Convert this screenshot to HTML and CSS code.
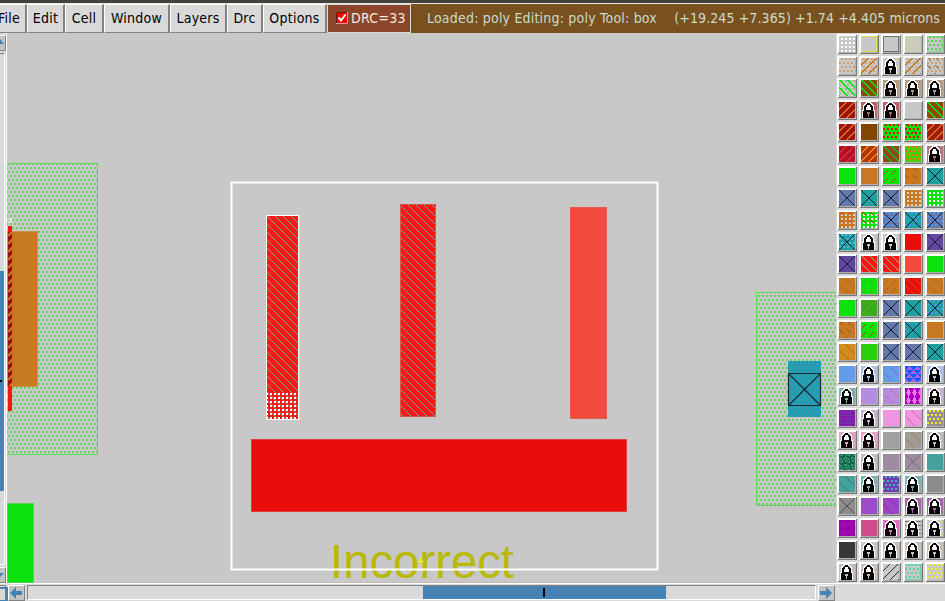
FILE: index.html
```html
<!DOCTYPE html>
<html lang="en">
<head>
<meta charset="utf-8">
<title>poly</title>
<link rel="stylesheet" href="styles.css">
</head>
<body>
<header class="menubar">
  <button class="menu file"><span>File</span></button>
  <button class="menu edit">Edit</button>
  <button class="menu cell-menu">Cell</button>
  <button class="menu window">Window</button>
  <button class="menu layers">Layers</button>
  <button class="menu drc">Drc</button>
  <button class="menu options">Options</button>
  <div class="drc-status">
    <svg width="12" height="12" viewBox="0 0 12 12"><path fill="#f00" d="M0 0h12v12H0z"/><path d="M.5 12V.5H12" fill="none" stroke="#701810"/><path d="M0 11.5h11.5V0" fill="none" stroke="#e8a090"/><path d="M2.5 5.5l2.5 3 4.500-6" fill="none" stroke="#fff" stroke-width="2"/></svg>
    <span class="drc-label">DRC=33</span>
  </div>
  <div class="status"><span class="loaded">Loaded: poly Editing: poly Tool: box</span><span class="coords">(+19.245 +7.365) +1.74 +4.405 microns</span></div>
</header>
<main class="workspace">
  <aside class="vscroll">
    <div class="varrow"><svg width="4" height="12" viewBox="0 0 4 12"><path d="M0 2l4 5H0z" fill="#4682b4"/></svg></div>
    <div class="vtrack"><div class="vthumb"><i></i></div></div>
    <div class="varrow down"><svg width="4" height="12" viewBox="0 0 4 12"><path d="M0 4h4L0 8z" fill="#4682b4"/></svg></div>
  </aside>
  <svg class="layout" width="829" height="550" viewBox="7 33 829 550" shape-rendering="crispEdges">
    <defs>
      <pattern id="well" width="4" height="8" x="2" y="167" patternUnits="userSpaceOnUse"><path d="M0 0h2v2H0zM2 4h2v2H2z" fill="#5fd75f"/></pattern>
      <pattern id="hatch" width="8" height="8" x="267" y="216" patternUnits="userSpaceOnUse"><path d="M0 0h1v1H0zM1 1h1v1H1zM2 2h1v1H2zM3 3h1v1H3zM4 4h1v1H4zM5 5h1v1H5zM6 6h1v1H6zM7 7h1v1H7z" fill="#8c98b0"/></pattern>
      <pattern id="faint" width="16" height="16" patternUnits="userSpaceOnUse"><path d="M0 16L16 0" stroke="#be5000"/></pattern>
      <pattern id="select" width="4" height="4" x="270" y="393" patternUnits="userSpaceOnUse"><path d="M0 0h2v2H0z" fill="#fff"/></pattern>
      <pattern id="contact" width="8" height="8" y="236" patternUnits="userSpaceOnUse"><path d="M0 8L8 0" stroke="#c87820" stroke-width="1.500"/></pattern>
      <pattern id="tealdots" width="4" height="8" x="2" y="167" patternUnits="userSpaceOnUse"><path d="M0 0h2v2H0zM2 4h2v2H2z" fill="#4094b8"/></pattern>
    </defs>
    <path d="M7 163.500h90.500v291H7" fill="url(#well)" stroke="#5fd75f"/>
    <path d="M836 292.500h-79.500v213h79.500" fill="url(#well)" stroke="#5fd75f"/>
    <path d="M8 219h4M8 221h4M11 218v5" stroke="#eee"/>
    <rect x="7.500" y="231.500" width="30" height="155" fill="#c67a22" stroke="#cb9154"/>
    <rect x="8" y="226" width="4" height="185" fill="#fa140a"/>
    <rect x="8" y="232" width="4" height="154" fill="#a50e0e"/>
    <rect x="8" y="232" width="4" height="154" fill="url(#contact)"/>
    <rect x="7.500" y="503.500" width="26" height="79" fill="#0ce20c" stroke="#58cf58"/>
    <rect x="266.500" y="215.500" width="32" height="203" fill="#fc180c"/>
    <rect x="267" y="216" width="31" height="177" fill="url(#faint)"/>
    <rect x="267" y="216" width="31" height="203" fill="url(#hatch)"/>
    <rect x="267" y="393" width="31" height="26" fill="url(#select)"/>
    <rect x="266.500" y="215.500" width="32" height="203.500" fill="none" stroke="#fff"/>
    <path d="M299.500 217v202" stroke="#e6e6e6" stroke-dasharray="2 2"/>
    <rect x="400.500" y="204.500" width="35" height="212" fill="#fc180c"/>
    <rect x="400.500" y="204.500" width="35" height="212" fill="url(#hatch)" stroke="#d9544e"/>
    <rect x="570.500" y="207.500" width="35.500" height="211" fill="#f24a3c" stroke="#e35a4f"/>
    <rect x="251.500" y="439.500" width="375" height="72" fill="#eb0c0c" stroke="#df4040"/>
    <g shape-rendering="auto">
      <rect x="788" y="361" width="33" height="56" fill="#1f9fae"/>
      <rect x="788" y="361" width="33" height="56" fill="url(#tealdots)"/>
      <path d="M788.500 373.500h32v32h-32zM788.500 373.500l32 32M820.500 373.500l-32 32" fill="none" stroke="#102c30" stroke-width="1.200"/>
    </g>
    <text class="cell-label" x="330" y="577.500" textLength="184" lengthAdjust="spacingAndGlyphs">Incorrect</text>
    <path d="M417.500 561h6M420.500 558v6" stroke="#f2f21c"/>
    <rect x="231.500" y="182.500" width="426" height="387" fill="none" stroke="#fff" stroke-width="2" shape-rendering="auto"/>
    <path d="M80 582.500h756" stroke="#cdb8b8"/>
  </svg>
  <aside class="palette" id="palette"></aside>
</main>
<footer class="hscroll">
  <div class="corner"></div>
  <div class="harrow"><svg width="14" height="14" viewBox="0 0 14 14"><path d="M1 7l6-6v4h6v4H7v4z" fill="#4682b4"/></svg></div>
  <div class="htrack"><div class="hthumb"><i></i></div></div>
  <div class="harrow"><svg width="14" height="14" viewBox="0 0 14 14"><path d="M13 7L7 1v4H1v4h6v4z" fill="#4682b4"/></svg></div>
</footer>
<script src="palette.js"></script>
</body>
</html>
```
FILE: styles.css
```css
* { box-sizing: border-box; }
body {
  margin: 0;
  width: 945px;
  height: 601px;
  overflow: hidden;
  display: flex;
  flex-direction: column;
  background: #d9d9d9;
  border-top: 3px solid #43423a;
  font-family: "DejaVu Sans Condensed", "DejaVu Sans", sans-serif;
  font-stretch: condensed;
  font-size: 14px;
}
.menubar {
  height: 30px;
  flex: none;
  display: flex;
  border-top: 1px solid #e8e8e8;
}
.menu {
  height: 29px;
  flex: none;
  margin: 0;
  padding: 0 0 1px;
  border: solid;
  border-width: 1px 2px 1px 1px;
  border-color: #fff #828282 #828282 #fff;
  background: #d9d9d9;
  color: #000;
  font: inherit;
  letter-spacing: 0.25px;
  text-align: center;
  white-space: nowrap;
}
.file { width: 27px; display: flex; align-items: center; justify-content: flex-end; padding-right: 5px; overflow: hidden; border-left: 0; }
.edit { width: 38px; }
.cell-menu { width: 39px; }
.window { width: 66px; }
.layers { width: 57px; }
.drc { width: 36px; }
.options { width: 64px; }
.drc-status {
  width: 84px;
  display: flex;
  flex: none;
  align-items: center;
  gap: 3px;
  padding: 0 0 1px 8px;
  border: 1px solid #d9d9d9;
  background: #8b4528;
  color: #f4e8e0;
}
.drc-label { white-space: nowrap; letter-spacing: 0.3px; }
.status {
  flex: 1;
  display: flex;
  align-items: center;
  justify-content: space-between;
  padding: 0 5px 1px 16px;
  background: #79511e;
  color: #c8dcd0;
  white-space: nowrap;
}
.loaded { letter-spacing: 0.2px; }
.coords { letter-spacing: 0.1px; }
.workspace {
  display: flex;
  height: 550px;
  flex: none;
}
.vscroll {
  width: 7px;
  flex: none;
  display: flex;
  flex-direction: column;
  border-right: 1px solid #fff;
  padding-top: 2px;
}
.varrow {
  width: 6px;
  height: 16px;
  flex: none;
  border: solid #fff;
  border-width: 1px 0 0;
  border-right: 1px solid #828282;
  border-bottom: 1px solid #828282;
  background: #c3c3c3;
  display: flex;
  align-items: center;
}
.vtrack {
  flex: 1;
  width: 5px;
  margin: 2px 0;
  border: 1px solid #828282;
  border-left: 0;
  border-right-color: #fff;
  border-bottom-color: #fff;
}
.vthumb {
  height: 220px;
  margin-top: 217px;
  background: #4682b4;
  display: flex;
  align-items: center;
}
.vthumb i { width: 2px; height: 2px; background: #000; }
.layout { display: block; flex: none; background: #c8c8c8; overflow: visible; }
.cell-label {
  font-family: "Liberation Sans", Arial, sans-serif;
  font-size: 48px;
  fill: #b9b900;
}
.palette {
  flex: none;
  width: 110px;
  margin: 0 -2px 0 1px;
  padding-top: 1px;
  display: grid;
  grid-template-columns: repeat(5, 22px);
  grid-auto-rows: 22px;
}
.swatch {
  width: 20px;
  height: 20px;
  display: block;
}
.hscroll {
  height: 18px;
  flex: none;
  display: flex;
  border-top: 1px solid #fff;
  padding-top: 1px;
}
.corner {
  width: 6px;
  height: 16px;
  margin-right: 2px;
  border: solid #828282;
  border-width: 1px 1px 0 0;
  position: relative;
}
.corner::after {
  content: "";
  position: absolute;
  left: -8px;
  top: 1px;
  width: 12px;
  height: 11px;
  border: 2px solid #4682b4;
}
.harrow {
  width: 17px;
  height: 16px;
  flex: none;
  border: 1px solid #fff;
  border-right-color: #828282;
  border-bottom-color: #828282;
  background: #c3c3c3;
  display: flex;
  align-items: center;
}
.htrack {
  width: 789px;
  height: 15px;
  margin: 0 2px;
  border: 1px solid #828282;
  border-right-color: #fff;
  border-bottom-color: #fff;
}
.hthumb {
  width: 243px;
  height: 13px;
  margin-left: 395px;
  padding-right: 2px;
  background: #4682b4;
  display: flex;
  align-items: center;
  justify-content: center;
}
.hthumb i { width: 2px; height: 9px; background: #000; }
```
FILE: palette.js
```js
// Each entry is "base colour, mark:colour, ..."; marks are painted in order.
const named = {
  bg: '#c8c8c8', G: '#0ce20c', O: '#c87820', T: '#1ea0a0', B: '#6478aa', P: '#6446a0',
  R: '#eb0c0c', D: '#a50e0e', N: '#8b4a08', K: '#141e32', W: '#ffffff', Y: '#dede50'
};
const rows = [
  'bg dots:W|bg box:Y|bg box:#707070|bg down:Y|bg box:#90d090 odd:#50d750',
  'bg odd:#d2a070|bg odd:#d2a070 rise:O|bg up:Y lock|bg odd:#c0b0a0 rise:O|bg odd:#d2a070 short:#8c5a28',
  'bg odd:#78d078 fall:G|N fall:G|#b49c82 lock|#b49c82 lock|#b49c82 lock',
  'D rise:O|#b86464 lock|#b86464 lock|bg|N fall:G',
  'D rise:O|#824600|G odd:R|G odd:R short:#804000|#a81a08 rise:O',
  '#b4102c rise:#d82c30|#b83208 rise:#dc8c14|#904818 fall:#18b818|#46d200 odd:#f06818|#b87878 lock',
  'G|O|G gap:#a04600|O short:#965000|T x:K',
  'B x:K|T x:K|B x:K|O dots:#e0d0c0|G dots:W',
  'O dots:#e0d0c0 short:#c83c50|G dots:W short:R|B odd:#5098f0 x:K|T odd:#5098f0 x:K|B odd:#5098f0 x:K',
  'T odd:#50b8e0 x:K|bg lock|bg lock|R|P x:K',
  'P x:K|#fc180c down:#b4a8b4|#fc180c down:#b4a8b4|#f24a3c|G',
  'O faint:#b46414|G gap:#50b010|O gap:#b46414|R down:#b45a00|O faint:#b46414',
  'G|#3caa1e up:#50b41e|B x:K|T x:K|T odd:#5098f0 x:K',
  'O short:#8c5000|G gap:#a04600|B x:K|T short:#5098f0 x:K|O',
  '#d28c1e faint:#b46414|#28d00a|B x:K|B x:K|T x:K',
  '#649beb|#aac0e8 lock|#649beb faint:#6478c8|#0a5aff tri:#a064dc|#aac0e8 lock',
  '#78b0b0 lock|#b48ce0|#b48ce0 faint:#c8649b|#aa00be diamond:#eb78eb|#c8b4d2 lock',
  '#8c14b4 wave:#6c3ca0|#c8b4d2 lock|#f096e1|#f096e1 faint:#d264a0|#988c94 odd:#f0f020',
  '#e6a0c8 lock|#e6a0c8 lock|#a0a0a0|#a09c96 faint:#aa783c|#bebebe lock',
  '#146444 maze:#38a080|#bebebe lock|#a08ca0|#a08ca0 x:#707070|#46a09b',
  '#46a09b faint:#3c785a|#78b4b4 lock|#6e3cb4 odd:#46b4b4|#78b4b4 lock|#8c8c8c',
  '#8c8c8c x:#505050|#9b4bc8|#9b46c8 faint:#a01e8c|#aa64aa lock|#aa64aa lock',
  '#9600b4 ring:#be1496|#d24b8c|#dc6ec8 lock|#c8c8c8 lines:#787878 lock|bg up:Y lock',
  '#373737|bg lock|#c8beb4 lock|#c8beb4 lock|#c8beb4 lock',
  '#c8beb4 lock|#c8beb4 lock|bg up:#303030|bg box:#78d2aa odd:#50dca0|bg odd:#f0f020'
];

const color = c => named[c] || c;

function points(test, fill) {
  let d = '';
  for (let y = 0; y < 16; y++)
    for (let x = 0; x < 16; x++)
      if (test(x, y)) d += `M${x + 2} ${y + 2}h1v1h-1z`;
  return `<path d="${d}" fill="${fill}"/>`;
}

const marks = {
  dots: (x, y) => x % 4 > 1 && y % 4 > 1,
  odd: (x, y) => y % 4 < 2 && (x + (y % 8 < 4 ? 0 : 2)) % 4 > 1,
  up: (x, y) => (x + y) % 8 === 6,
  down: (x, y) => (x - y + 16) % 8 === 1,
  rise: (x, y) => (x + y) % 8 > 5,
  fall: (x, y) => (x - y + 16) % 8 < 2,
  faint: (x, y) => (x - y + 32) % 12 === 2,
  short: (x, y) => (x - y + 16) % 8 === 1 && x % 8 < 4,
  gap: (x, y) => (x + y) % 8 === 6 && x % 8 < 5,
  x: (x, y) => x === y || x + y === 15,
  box: (x, y) => x < 1 || y < 1 || x > 14 || y > 14,
  tri: (x, y) => Math.abs((x + (y % 8 < 4 ? 0 : 4)) % 8 - 4) <= y % 4,
  diamond: (x, y) => Math.abs(x % 6 - 3) * 2 + Math.abs(y % 8 - 4) < 5,
  ring: (x, y) => Math.abs(Math.abs(x % 8 - 4) + Math.abs(y % 8 - 4) - 3) < 1,
  wave: (x, y) => y % 4 === 1 || (y % 4 === 3 && x % 8 < 4),
  lines: (x, y) => y % 4 === 1,
  maze: (x, y) => (x * 5 + y * 3 + x * y) % 7 < 3
};

const lock = base =>
  '<path d="M3 10h1V5h1V4h1V3h1V2h5v1h1v1h1v1h1v5h1v8H3z" fill="#fff"/>' +
  '<path d="M4 11h1V6h1V5h1V4h1V3h3v1h1v1h1v1h1v5h1v7H4zM7 7v3h5V7h-1V5H8v2z" fill="#000" fill-rule="evenodd"/>' +
  `<path d="M8 12h3v2h-1v3H9v-3H8z" fill="${base}"/>`;

function swatch(entry) {
  const [name, ...parts] = entry.split(' ');
  const base = color(name);
  let body = `<path d="M0 0h20v20H0z" fill="#fff"/><path d="M19 1v18H1v1h19V1z" fill="#787878"/><path d="M18 2v16H2v1h17V2z" fill="#b0b0b0"/><path d="M2 2h16v16H2z" fill="${base}"/>`;
  for (const part of parts) {
    const [kind, tint] = part.split(':');
    if (kind === 'lock') body += lock(base);
    else if (marks[kind]) body += points(marks[kind], color(tint));
  }
  return `<svg class="swatch" viewBox="0 0 20 20" shape-rendering="crispEdges">${body}</svg>`;
}

document.getElementById('palette').innerHTML =
  rows.flatMap(row => row.split('|')).map(swatch).join('');
```
